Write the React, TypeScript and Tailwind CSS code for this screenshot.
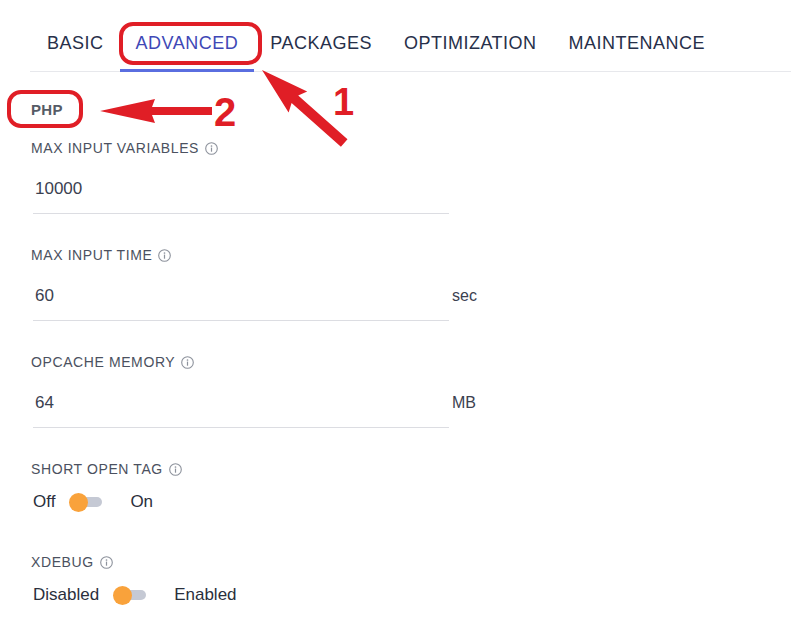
import React from "react";

const tabs = ["BASIC", "ADVANCED", "PACKAGES", "OPTIMIZATION", "MAINTENANCE"];

const fields = [
    { label: "MAX INPUT VARIABLES", value: "10000", unit: "" },
    { label: "MAX INPUT TIME", value: "60", unit: "sec" },
    { label: "OPCACHE MEMORY", value: "64", unit: "MB" },
];

const toggles = [
    { label: "SHORT OPEN TAG", off: "Off", on: "On" },
    { label: "XDEBUG", off: "Disabled", on: "Enabled" },
];

const InfoIcon = () => (
    <svg width="13" height="13" viewBox="0 0 13 13" className="ml-[6px]">
        <circle cx="6.5" cy="6.5" r="5.8" fill="none" stroke="#8d929c" strokeWidth="1.1" />
        <circle cx="6.5" cy="4" r="0.85" fill="#8d929c" />
        <rect x="5.9" y="5.6" width="1.2" height="4.1" fill="#8d929c" />
    </svg>
);

const Label = ({ text }: { text: string }) => (
    <div className="flex items-center h-[18px] text-[14px] leading-[18px] tracking-[0.6px] text-[#4b5160]">
        {text}
        <InfoIcon />
    </div>
);

const Toggle = () => (
    <div className="relative w-[33px] h-[20px] flex items-center">
        <div className="absolute left-[9px] right-0 h-[10px] rounded-full bg-[#c5c9d4]" />
        <div className="relative w-[19px] h-[19px] rounded-full bg-[#f9a23b]" />
    </div>
);

const Annotations = () => (
    <>
        <div className="absolute left-[119px] top-[22px] w-[143px] h-[43px] rounded-[14px] border-[4px] border-[#e01e26]" />
        <div className="absolute left-[7px] top-[90px] w-[76px] h-[38px] rounded-[14px] border-[4px] border-[#e01e26]" />
        <svg className="absolute left-0 top-0 pointer-events-none" width="791" height="628">
            <polygon
                fill="#e01e26"
                points="262,70 307.2,91.4 298.2,95.5 347.5,139.3 340.9,146.7 291.6,102.9 288.6,112.4"
            />
            <polygon
                fill="#e01e26"
                points="100,111 155,99 152,107 212,107 212,115 152,115 155,123"
            />
        </svg>
        <div className="absolute left-[333px] top-[80px] text-[38px] leading-[44px] font-bold text-[#e01e26]">1</div>
        <div className="absolute left-[214px] top-[89px] text-[40px] leading-[46px] font-bold text-[#e01e26]">2</div>
    </>
);

export default function App() {
    return (
        <div className="relative w-[791px] h-[628px] bg-white overflow-hidden" style={{ fontFamily: '"Liberation Sans", Arial, sans-serif' }}>
            <div className="ml-[30px] pl-px flex border-b border-[#e7e8ec]">
                {tabs.map((t) => (
                    <div
                        key={t}
                        className={`h-[72px] px-[16px] pt-[32px] text-[18px] leading-[22px] tracking-[0.5px] border-b-[3px] -mb-px ${t === "ADVANCED"
                            ? "text-[#4048b6] border-[#5a6ee0]"
                            : "text-[#27304a] border-transparent"
                            }`}
                    >
                        {t}
                    </div>
                ))}
            </div>

            <div className="pl-[31px]">
                <div className="mt-[28px] text-[15px] leading-[20px] font-bold tracking-[0.3px] text-[#555b66]">PHP</div>

                <div className="mt-[19px] flex flex-col gap-[32px]">
                    {fields.map((f) => (
                        <div key={f.label}>
                            <Label text={f.label} />
                            <div className="flex items-start">
                                <div className="ml-[2px] w-[416px] h-[57px] pt-[21px] pl-[2px] text-[17px] leading-[22px] text-[#3b4150] border-b border-[#dcdde2]">
                                    {f.value}
                                </div>
                                <div className="ml-[3px] pt-[21px] text-[16px] leading-[22px] text-[#3b4150]">{f.unit}</div>
                            </div>
                        </div>
                    ))}
                </div>

                <div className="mt-[32px] flex flex-col gap-[40px]">
                    {toggles.map((t) => (
                        <div key={t.label}>
                            <Label text={t.label} />
                            <div className="mt-[13px] ml-[2px] flex items-center h-[22px] text-[17px] leading-[22px] text-[#2a2f3c]">
                                <span>{t.off}</span>
                                <span className="ml-[14px]"><Toggle /></span>
                                <span className="ml-[28px]">{t.on}</span>
                            </div>
                        </div>
                    ))}
                </div>
            </div>

            <Annotations />
        </div>
    );
}
